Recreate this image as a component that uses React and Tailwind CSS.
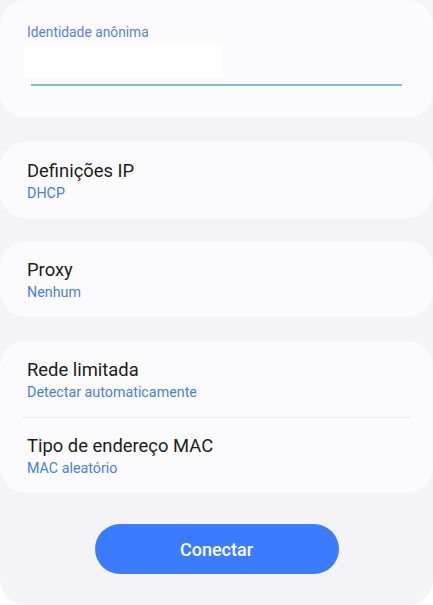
const rows = [
  { title: 'Definições IP', value: 'DHCP' },
  { title: 'Proxy', value: 'Nenhum' },
];

const Row = ({ title, value }) => (
  <div className="px-[27px]">
    <p className="text-[18.4px] leading-[24px] text-[#1c1c1c]">{title}</p>
    <p className="mt-[1px] text-[14.3px] leading-[19px] text-[#4a7fd6]">{value}</p>
  </div>
);

export default function App() {
  return (
    <div className="bg-white" style={{ fontFamily: 'Roboto, "Noto Sans", sans-serif' }}>
      <div className="flex h-[605px] w-[433px] flex-col rounded-b-[26px] bg-[#f4f4f6]">
        <div className="h-[118px] rounded-[26px] bg-[#fbfbfd] pt-[23px]">
          <p className="px-[27px] text-[13.8px] leading-[19px] text-[#5b82d0]">Identidade anônima</p>
          <div className="ml-[24px] mt-[2px] h-[34px] w-[199px] bg-white" />
          <div className="ml-[31px] mt-[6px] h-[1.5px] w-[371px] bg-[#7fbfcf]" />
        </div>

        <div className="mt-[24px] h-[76px] rounded-[26px] bg-[#fbfbfd] pt-[17px]">
          <Row {...rows[0]} />
        </div>
        <div className="mt-[23px] h-[76px] rounded-[26px] bg-[#fbfbfd] pt-[17px]">
          <Row {...rows[1]} />
        </div>

        <div className="mt-[24px] h-[152px] rounded-[26px] bg-[#fbfbfd] pt-[17px]">
          <Row title="Rede limitada" value="Detectar automaticamente" />
          <div className="mx-[22px] mb-[16px] mt-[15px] h-px bg-[#e9e9eb]" />
          <Row title="Tipo de endereço MAC" value="MAC aleatório" />
        </div>

        <div className="flex justify-center pt-[31px]">
          <button
            type="button"
            className="h-[50px] w-[244px] rounded-full bg-[#3b7cff] text-[18px] font-medium text-white"
          >
            Conectar
          </button>
        </div>
      </div>
    </div>
  );
}
